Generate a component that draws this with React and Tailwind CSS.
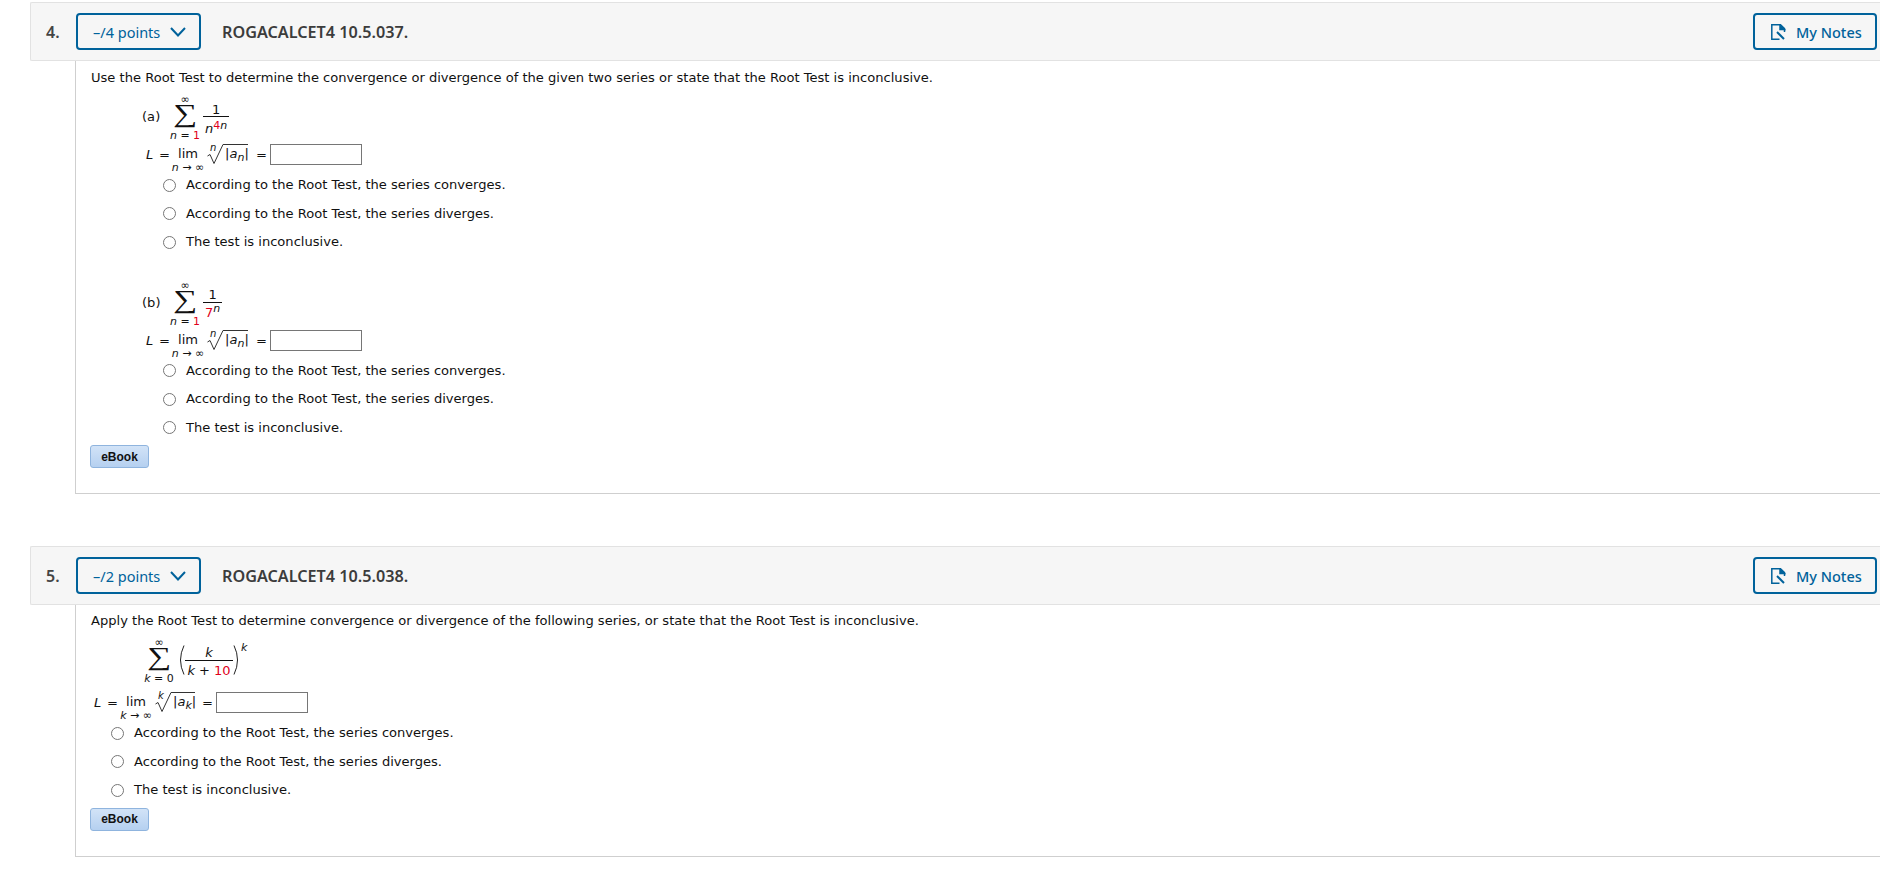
const V = '[font-family:"DejaVu_Sans",Verdana,sans-serif]';
const RED = 'text-[#e0001b]';

function Header({ num, pts, code }) {
  return (
    <div className="flex h-[59px] items-center rounded-l-[2px] border border-r-0 border-[#e2e2e2] bg-[#f6f6f6] pr-[3px] font-['Noto_Sans',sans-serif]">
      <div className="w-[45px] pl-[15px] text-[16px] font-semibold text-[#444]">{num}</div>
      <button className="flex h-[37px] w-[125px] items-center rounded-[4px] border-2 border-[#00629b] pl-[15px] text-[14.5px] text-[#00629b]">
        <span>–/{pts} points</span>
        <svg className="ml-[10px]" width="16" height="10" viewBox="0 0 16 10" fill="none" stroke="#00629b" strokeWidth="2"><path d="M1 1 L8 8.5 L15 1" /></svg>
      </button>
      <div className="ml-[21px] text-[16.2px] font-semibold text-[#3c3c3c]">ROGACALCET4 {code}.</div>
      <button className="ml-auto flex h-[37px] w-[124px] items-center rounded-[4px] border-2 border-[#00629b] pl-[16px] text-[14.5px] font-medium text-[#00629b]">
        <svg width="15" height="16" viewBox="0 0 15 16" fill="none" stroke="#00629b" strokeWidth="1.5">
          <path d="M13.5 8 V4.5 L9.5 0.8 H0.8 V15.2 H8.5" />
          <path d="M9 1 V5.5 H13.5 Z" fill="#00629b" />
          <path d="M6 8 L13 15" strokeWidth="2" />
        </svg>
        <span className="ml-[10px]">My Notes</span>
      </button>
    </div>
  );
}

function Radio({ text }) {
  return (
    <label className="flex h-[28.5px] items-center">
      <span className="h-[13px] w-[13px] shrink-0 rounded-full border border-[#767676] bg-white" />
      <span className="ml-[10px]">{text}</span>
    </label>
  );
}

function Radios({ cls }) {
  return (
    <div className={`flex flex-col ${cls}`}>
      <Radio text="According to the Root Test, the series converges." />
      <Radio text="According to the Root Test, the series diverges." />
      <Radio text="The test is inconclusive." />
    </div>
  );
}

function Sigma({ v, val, red }) {
  return (
    <div className="flex w-[28px] flex-col items-center">
      <div className="h-[10px] text-[11px] leading-[10px]">∞</div>
      <div className="h-[24px] -translate-y-[3px] scale-x-[1.3] font-['Liberation_Serif'] text-[26px] leading-[24px]">∑</div>
      <div className="h-[14px] whitespace-nowrap text-[11px] leading-[14px]">
        <i>{v}</i> = <span className={red ? RED : ''}>{val}</span>
      </div>
    </div>
  );
}

function Fraction({ top, bottom }) {
  return (
    <div className="flex flex-col items-center">
      <div className="h-[16px] w-full border-b border-[#111] text-center text-[13px] leading-[15px]">{top}</div>
      <div className="h-[18px] whitespace-nowrap px-[2px] text-[13px] leading-[20px]">{bottom}</div>
    </div>
  );
}

function LimitRow({ v, rootW, gap, rowH }) {
  return (
    <div className={`ml-[3px] flex items-start ${rowH}`}>
      <i className="mt-[3px] w-[13px]">L</i>
      <span className="mt-[3px] w-[14px]">=</span>
      <div className="flex w-[30px] flex-col items-center">
        <span className="mt-[2px] leading-[16px]">lim</span>
        <span className="mt-[1px] whitespace-nowrap text-[11px] leading-[10px]"><i>{v}</i> → ∞</span>
      </div>
      <div className={`relative ml-[4px] h-[21px] ${rootW}`}>
        <i className="absolute left-[3px] top-[-1px] text-[10px] leading-[10px]">{v}</i>
        <svg className="absolute left-0 top-0 overflow-visible" width="16" height="21" viewBox="0 0 16 21" fill="none" stroke="#333" strokeWidth="1">
          <path d="M0.5 12 L3 10.5 L7 19.5 L16 0.5" />
        </svg>
        <div className="absolute left-[16px] right-0 top-0 border-t border-[#333]" />
        <span className="absolute left-[18px] top-[2px] whitespace-nowrap leading-[16px]">|<i>a</i><i className="relative top-[3px] text-[11px]">{v}</i>|</span>
      </div>
      <span className={`mt-[3px] w-[14px] ${gap}`}>=</span>
      <input readOnly className="h-[21px] w-[92px] border border-[#767676] bg-white" />
    </div>
  );
}

function EBook() {
  return (
    <button className="-ml-[1px] flex h-[23px] w-[59px] items-center justify-center rounded-[3px] border border-[#8fb4de] bg-gradient-to-b from-[#d2e3f7] to-[#b5d0f0] font-['Liberation_Sans'] text-[12px] font-bold text-[#111]">
      eBook
    </button>
  );
}

function Part({ label, top, bottom }) {
  return (
    <div className="pl-[52px]">
      <div className="flex h-[49px] items-start">
        <span className="mt-[14px] w-[28px] -translate-x-[1px]">({label})</span>
        <Sigma v="n" val="1" red />
        <div className="ml-[4px] mt-[6px]"><Fraction top={top} bottom={bottom} /></div>
      </div>
      <LimitRow v="n" rootW="w-[41px]" gap="ml-[8px]" rowH="h-[26px]" />
      <Radios cls="ml-[20px] mt-[1px]" />
    </div>
  );
}

export default function App() {
  return (
    <div className={`h-[884px] overflow-hidden bg-white pl-[30px] pt-[2px] ${V} text-[13.07px] leading-[16px] text-[#111]`}>
      <Header num="4." pts="4" code="10.5.037" />
      <div className="ml-[45px] h-[433px] border-b border-l border-[#cfcfcf] pl-[15px] pt-[9px]">
        <p>Use the Root Test to determine the convergence or divergence of the given two series or state that the Root Test is inconclusive.</p>
        <div className="mt-[9px]">
          <Part label="a" top={<span className="relative top-[1px]">1</span>} bottom={<span className="relative top-[2px]"><i>n</i><span className="relative top-[-4px] text-[11px]"><span className={RED}>4</span><i>n</i></span></span>} />
        </div>
        <div className="mt-[24px]">
          <Part label="b" top="1" bottom={<span><span className={RED}>7</span><i className="relative top-[-5px] text-[11px]">n</i></span>} />
        </div>
        <div className="mt-[3px]"><EBook /></div>
      </div>

      <div className="mt-[52px]">
        <Header num="5." pts="2" code="10.5.038" />
      </div>
      <div className="ml-[45px] h-[252px] border-b border-l border-[#cfcfcf] pl-[15px] pt-[8px]">
        <p>Apply the Root Test to determine convergence or divergence of the following series, or state that the Root Test is inconclusive.</p>
        <div className="mt-[9px] flex h-[54px] items-start pl-[54px]">
          <Sigma v="k" val="0" />
          <svg className="ml-[4px] mt-[7px]" width="8" height="30" viewBox="0 0 8 30" fill="none" stroke="#222" strokeWidth="1"><path d="M7 0.5 Q0 15 7 29.5" /></svg>
          <div className="mt-[7px] w-[48px]">
            <Fraction top={<i>k</i>} bottom={<span><i>k</i> + <span className={RED}>10</span></span>} />
          </div>
          <svg className="mt-[7px]" width="8" height="30" viewBox="0 0 8 30" fill="none" stroke="#222" strokeWidth="1"><path d="M1 0.5 Q8 15 1 29.5" /></svg>
          <i className="mt-[4px] text-[11px] leading-[12px]">k</i>
        </div>
        <LimitRow v="k" rootW="w-[40px]" gap="ml-[7px]" rowH="h-[27px]" />
        <Radios cls="ml-[20px]" />
        <div className="mt-[3px]"><EBook /></div>
      </div>
    </div>
  );
}
